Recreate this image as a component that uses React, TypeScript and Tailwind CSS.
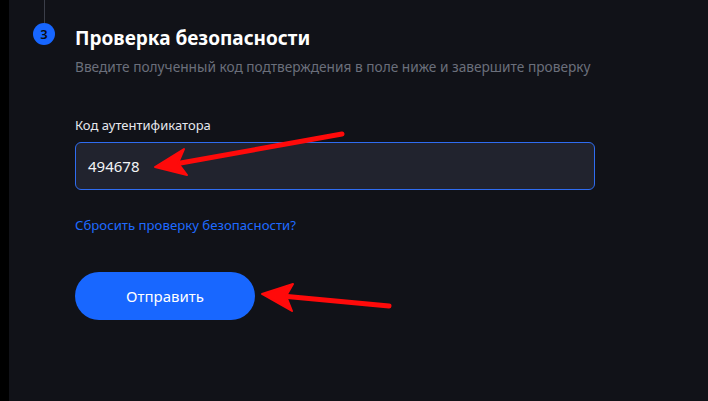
import React from "react";

export default function App() {
  return (
    <div
      className="relative flex w-[708px] h-[401px] overflow-hidden bg-[#111218]"
      style={{ fontFamily: '"Noto Sans", "Open Sans", sans-serif' }}
    >
      <div className="w-[9px] h-full bg-black shrink-0" />
      <div className="flex flex-1">
        <div className="ml-[24px] w-[22px] flex flex-col items-center shrink-0">
          <div className="w-px h-[23px] bg-[#3b3e49]" />
          <div className="w-[22px] h-[22px] rounded-full bg-[#1766ff] flex items-center justify-center text-[13px] font-semibold text-[#0b0c10] leading-none">
            3
          </div>
        </div>
        <div className="ml-[20px] flex flex-col">
          <div className="mt-[26px] text-[19px] leading-[24px] font-bold text-white">
            Проверка безопасности
          </div>
          <div className="mt-[8px] text-[13.7px] leading-[18px] text-[#6b6f7b]">
            Введите полученный код подтверждения в поле ниже и завершите проверку
          </div>
          <div className="mt-[40px] text-[13px] leading-[18px] text-[#e6e8ee]">
            Код аутентификатора
          </div>
          <div className="mt-[8px] w-[520px] h-[48px] rounded-[6px] border border-[#2f6cf0] bg-[#21232e] flex items-center pl-[12px] text-[15px] text-[#f3f4f6]">
            494678
          </div>
          <div className="mt-[26px] text-[13.2px] leading-[18px] text-[#1f6bff]">
            Сбросить проверку безопасности?
          </div>
          <button className="mt-[38px] w-[180px] h-[48px] rounded-full bg-[#1867ff] text-white text-[15px] flex items-center justify-center">
            Отправить
          </button>
        </div>
      </div>
      <svg
        className="absolute inset-0 pointer-events-none"
        width="708"
        height="401"
        viewBox="0 0 708 401"
      >
        <line x1="342" y1="134" x2="175" y2="164" stroke="#ff0a0a" strokeWidth="5" strokeLinecap="round" />
        <polygon points="155,167 184,149 178,163 187,175" fill="#ff0a0a" stroke="#ff0a0a" strokeWidth="2" strokeLinejoin="round" />
        <line x1="389" y1="306" x2="282" y2="296" stroke="#ff0a0a" strokeWidth="5" strokeLinecap="round" />
        <polygon points="262,294 293,284 286,296 292,311" fill="#ff0a0a" stroke="#ff0a0a" strokeWidth="2" strokeLinejoin="round" />
      </svg>
    </div>
  );
}
